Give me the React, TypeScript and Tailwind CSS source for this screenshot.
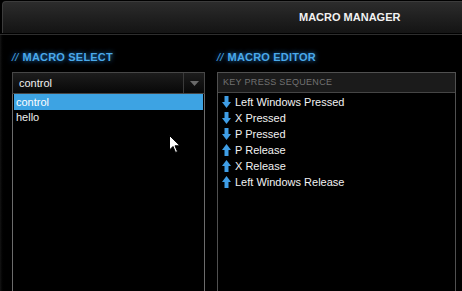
import React from "react";

const steps: { label: string; dir: "down" | "up" }[] = [
  { label: "Left Windows Pressed", dir: "down" },
  { label: "X Pressed", dir: "down" },
  { label: "P Pressed", dir: "down" },
  { label: "P Release", dir: "up" },
  { label: "X Release", dir: "up" },
  { label: "Left Windows Release", dir: "up" },
];

function KeyArrow({ dir }: { dir: "down" | "up" }) {
  return (
    <svg width="9" height="12" viewBox="0 0 9 12" className="shrink-0">
      <g transform={dir === "up" ? "rotate(180 4.5 6)" : undefined}>
        <rect x="2.5" y="0" width="4" height="7" fill="#3f9ee6" />
        <path d="M0 6 L9 6 L4.5 12 Z" fill="#3f9ee6" />
      </g>
    </svg>
  );
}

function SectionTitle({ children }: { children: React.ReactNode }) {
  return (
    <div className="h-[16px] flex items-center text-[11px] font-bold tracking-[0.2px] text-[#4aa9ea] [text-shadow:0_0_5px_rgba(40,140,230,0.9)]">
      <span className="italic font-normal mr-[4px]">//</span>
      {children}
    </div>
  );
}

export default function App() {
  return (
    <div
      className="relative w-[462px] h-[291px] overflow-hidden bg-black text-white flex flex-col"
      style={{ fontFamily: '"Liberation Sans", Arial, sans-serif' }}
    >
      {/* top bar */}
      <header className="mt-[1px] ml-[2px] h-[32px] shrink-0 rounded-tl-[4px] border-t border-l border-[#3c3c3c] bg-gradient-to-b from-[#2c2c2c] to-[#141414] flex items-center">
        <span className="ml-[296px] text-[11px] font-bold text-[#f2f2f2]">MACRO MANAGER</span>
      </header>
      <div className="h-[1px] bg-black shrink-0" />
      <div className="h-[1px] bg-[#2e2e2e] shrink-0" />

      <div className="flex-1 flex pl-[12px] pt-[14px] gap-[12px] bg-gradient-to-r from-[#151515] via-black via-[1%] to-black">
        {/* macro select */}
        <section className="w-[193px] flex flex-col">
          <SectionTitle>MACRO SELECT</SectionTitle>
          <div className="mt-[7px] h-[22px] shrink-0 flex border border-[#474747] bg-gradient-to-b from-[#1d1d1d] to-[#080808]">
            <span className="flex-1 pl-[6px] text-[11px] leading-[20px] text-[#f0f0f0]">control</span>
            <div className="w-[21px] border-l border-[#3a3a3a] flex items-center justify-center">
              <svg width="9" height="5" viewBox="0 0 9 5">
                <path d="M0 0 L9 0 L4.5 5 Z" fill="#6a6a6a" />
              </svg>
            </div>
          </div>
          <div className="flex-1 border-x border-[#6c6c6c] px-[1px]">
            <div className="h-[16px] bg-[#3da3e3] pl-[2px] text-[11px] leading-[16px] text-white">control</div>
            <div className="h-[15px] pl-[2px] text-[11px] leading-[15px] text-[#eeeeee]">hello</div>
          </div>
        </section>

        {/* macro editor */}
        <section className="w-[239px] flex flex-col">
          <SectionTitle>MACRO EDITOR</SectionTitle>
          <div className="mt-[7px] flex-1 border-x border-t border-[#505050] flex flex-col">
            <div className="h-[20px] shrink-0 border-b border-[#454545] bg-[#1b1b1b] pl-[5px] text-[9px] leading-[19px] tracking-[0.3px] text-[#727272]">
              KEY PRESS SEQUENCE
            </div>
            <ul className="pt-[1px] pl-[4px]">
              {steps.map((s) => (
                <li key={s.label} className="h-[16px] flex items-center gap-[4px] text-[11px] text-[#f2f2f2]">
                  <KeyArrow dir={s.dir} />
                  <span>{s.label}</span>
                </li>
              ))}
            </ul>
          </div>
        </section>
      </div>

      {/* mouse pointer */}
      <svg className="absolute left-[169px] top-[135px]" width="12" height="19" viewBox="0 0 12 19">
        <path d="M0.5 0.5 L0.5 15 L4 11.5 L6.5 17.5 L8.5 16.5 L6 10.8 L11 10.8 Z" fill="#ffffff" stroke="#000" strokeWidth="1" />
      </svg>
    </div>
  );
}
